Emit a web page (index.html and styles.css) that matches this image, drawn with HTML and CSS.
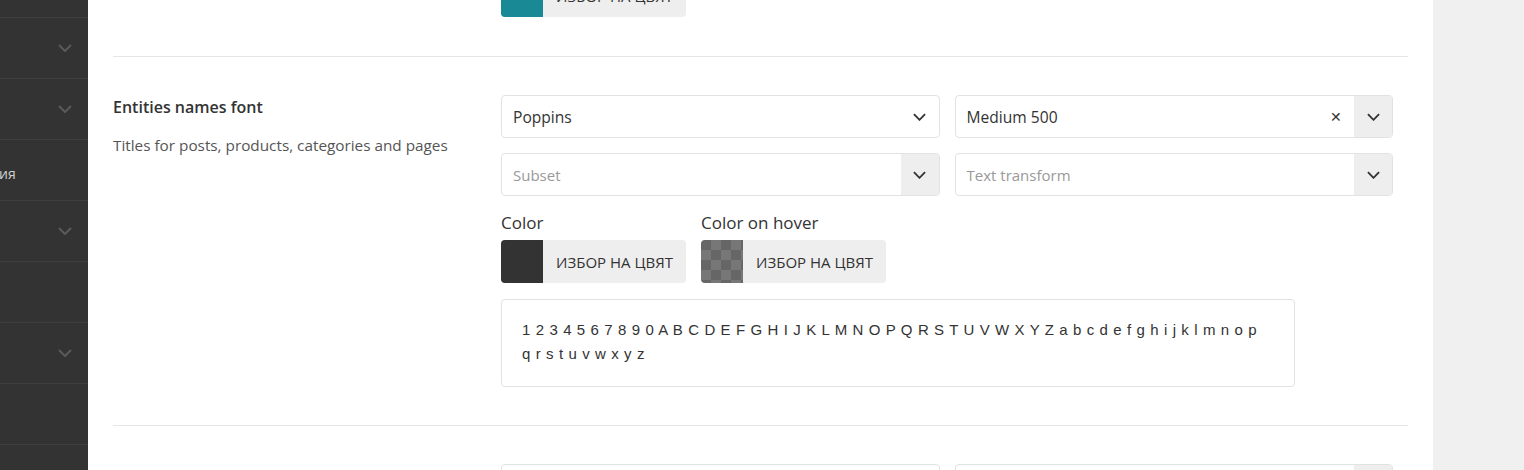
FILE: index.html
```html
<!DOCTYPE html>
<html lang="bg">
<head>
  <meta charset="UTF-8" />
  <title>Шрифтове</title>
  <link rel="stylesheet" href="styles.css">
</head>
<body>
  <div class="sidebar">
    <div class="menu-item"></div>
    <div class="menu-item"><svg class="menu-chevron" viewBox="0 0 14 8"><path d="M1 1l6 6 6-6"/></svg></div>
    <div class="menu-item"><svg class="menu-chevron" viewBox="0 0 14 8"><path d="M1 1l6 6 6-6"/></svg></div>
    <div class="menu-item"><span class="menu-label">ия</span></div>
    <div class="menu-item"><svg class="menu-chevron" viewBox="0 0 14 8"><path d="M1 1l6 6 6-6"/></svg></div>
    <div class="menu-item"></div>
    <div class="menu-item"><svg class="menu-chevron" viewBox="0 0 14 8"><path d="M1 1l6 6 6-6"/></svg></div>
    <div class="menu-item"></div>
    <div class="menu-item"></div>
  </div>

  <div class="main">
    <div class="content">
      <div class="section section-top">
        <div></div>
        <div class="controls">
          <div class="color-btn">
            <span class="swatch swatch-teal"></span>
            <span class="color-btn-text">ИЗБОР НА ЦВЯТ</span>
          </div>
        </div>
      </div>

      <div class="section">
        <div class="section-info">
          <h3>Entities names font</h3>
          <p>Titles for posts, products, categories and pages</p>
        </div>
        <div class="controls">
          <div class="select-grid">
            <div class="select">
              <span class="select-value">Poppins</span>
              <span class="select-arrow"><svg viewBox="0 0 14 8"><path d="M1 1l6 6 6-6"/></svg></span>
            </div>
            <div class="select">
              <span class="select-value">Medium 500</span>
              <span class="select-clear">✕</span>
              <span class="select-arrow grey"><svg viewBox="0 0 14 8"><path d="M1 1l6 6 6-6"/></svg></span>
            </div>
            <div class="select">
              <span class="select-value placeholder">Subset</span>
              <span class="select-arrow grey"><svg viewBox="0 0 14 8"><path d="M1 1l6 6 6-6"/></svg></span>
            </div>
            <div class="select">
              <span class="select-value placeholder">Text transform</span>
              <span class="select-arrow grey"><svg viewBox="0 0 14 8"><path d="M1 1l6 6 6-6"/></svg></span>
            </div>
          </div>

          <div class="color-row">
            <div class="color-field">
              <label>Color</label>
              <div class="color-btn">
                <span class="swatch swatch-dark"></span>
                <span class="color-btn-text">ИЗБОР НА ЦВЯТ</span>
              </div>
            </div>
            <div class="color-field">
              <label>Color on hover</label>
              <div class="color-btn">
                <span class="swatch swatch-empty"></span>
                <span class="color-btn-text">ИЗБОР НА ЦВЯТ</span>
              </div>
            </div>
          </div>

          <div class="preview">1 2 3 4 5 6 7 8 9 0 A B C D E F G H I J K L M N O P Q R S T U V W X Y Z a b c d e f g h i j k l m n o p q r s t u v w x y z</div>
        </div>
      </div>

      <div class="section">
        <div class="section-info">
          <h3>Secondary font</h3>
        </div>
        <div class="controls">
          <div class="select-grid">
            <div class="select">
              <span class="select-value">Poppins</span>
              <span class="select-arrow"><svg viewBox="0 0 14 8"><path d="M1 1l6 6 6-6"/></svg></span>
            </div>
            <div class="select">
              <span class="select-value">Regular 400</span>
              <span class="select-arrow grey"><svg viewBox="0 0 14 8"><path d="M1 1l6 6 6-6"/></svg></span>
            </div>
          </div>
        </div>
      </div>
    </div>
  </div>
</body>
</html>
```

FILE: styles.css
```css
* {
  margin: 0;
  padding: 0;
  box-sizing: border-box;
}
body {
  font-family: 'Open Sans', 'Liberation Sans', sans-serif;
  background-color: #f0f0f0;
  color: #333;
  height: 470px;
  overflow: hidden;
  display: flex;
}
.sidebar {
  width: 88px;
  flex-shrink: 0;
  background: #333;
  margin-top: -43px;
}
.menu-item {
  height: 61px;
  border-bottom: 1px solid #3e3e3e;
  display: flex;
  align-items: center;
  justify-content: flex-end;
  padding-right: 16px;
}
.menu-chevron {
  width: 14px;
  height: 8px;
  fill: none;
  stroke: #5a5a5a;
  stroke-width: 2;
}
.menu-label {
  margin-right: auto;
  color: #d0d0d0;
  font-size: 14px;
  margin-top: 6px;
  margin-left: -1px;
}
.main {
  width: 1345px;
  background: white;
  padding: 0 25px;
}
.content {
  margin-top: -26px;
}
.section {
  display: grid;
  grid-template-columns: 388px 1fr;
  padding: 38px 0;
  border-bottom: 1px solid #e6e6e6;
}
.section-top {
  padding-top: 0;
  padding-bottom: 39px;
}
.section-info h3 {
  font-size: 16px;
  font-weight: 600;
  color: #333;
  margin-top: 1px;
}
.section-info p {
  font-size: 15.3px;
  color: #555;
  margin-top: 17px;
}
.controls {
  width: 892px;
}
.select-grid {
  display: grid;
  grid-template-columns: 1fr 1fr;
  gap: 15px;
}
.select {
  height: 43px;
  border: 1px solid #e2e2e2;
  border-radius: 4px;
  display: flex;
  align-items: center;
}
.select-value {
  flex: 1;
  padding-left: 11px;
  font-size: 15.6px;
  color: #333;
}
.select-value.placeholder {
  font-size: 15px;
  color: #999;
}
.select-value.placeholder:last-of-type {
  font-size: 14.8px;
}
.select-clear {
  font-size: 14px;
  color: #333;
  padding: 0 12px;
}
.select-arrow {
  width: 38px;
  height: 100%;
  display: flex;
  align-items: center;
  justify-content: center;
}
.select-arrow.grey {
  background: #eee;
  border-radius: 0 3px 3px 0;
}
.select-arrow svg {
  width: 13px;
  height: 8px;
  fill: none;
  stroke: #333;
  stroke-width: 2;
}
.color-row {
  display: flex;
  gap: 15px;
  margin-top: 16px;
}
.color-field label {
  display: block;
  font-size: 17px;
  line-height: 22px;
  color: #333;
  margin-bottom: 6px;
}
.color-btn {
  width: 185px;
  height: 43px;
  background: #eee;
  border-radius: 4px;
  display: flex;
  align-items: center;
}
.swatch {
  width: 42px;
  height: 43px;
  border-radius: 4px 0 0 4px;
}
.swatch-teal {
  background: #188995;
}
.swatch-dark {
  background: #333;
}
.swatch-empty {
  background: repeating-conic-gradient(#777 0 25%, #666 0 50%) 0 0 / 20px 20px;
}
.color-btn-text {
  flex: 1;
  text-align: center;
  font-size: 15px;
  color: #333;
}
.preview {
  width: 794px;
  margin-top: 16px;
  border: 1px solid #e2e2e2;
  border-radius: 4px;
  padding: 18px 30px 20px 20px;
  font-family: 'Liberation Sans', sans-serif;
  font-size: 15px;
  line-height: 24px;
  letter-spacing: 0.6px;
  color: #333;
}
```
